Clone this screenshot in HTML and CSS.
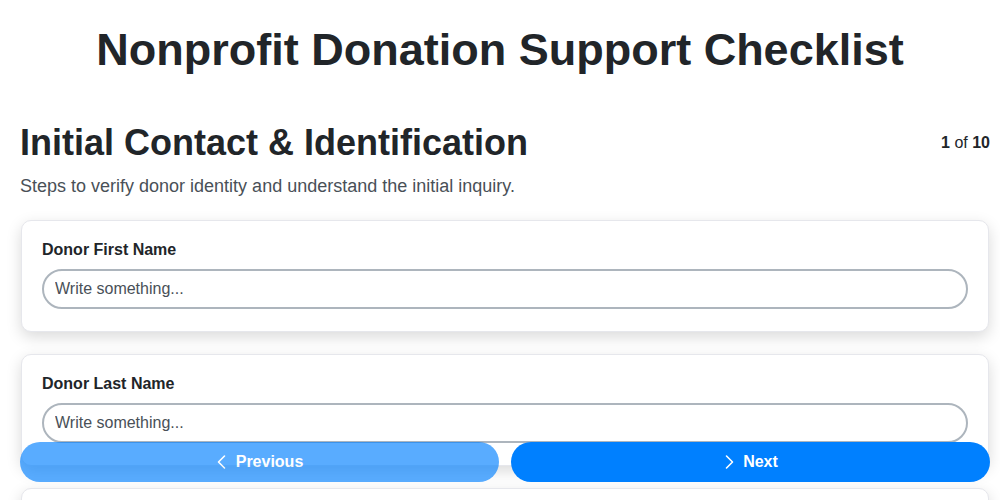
FILE: index.html
```html
<!DOCTYPE html>
<html lang="en">
<head>
<meta charset="utf-8">
<title>Nonprofit Donation Support Checklist</title>
<link rel="stylesheet" href="styles.css">
</head>
<body>
<header class="top">
  <h1 class="title">Nonprofit Donation Support Checklist</h1>
</header>
<main class="step">
  <div class="step-head">
    <h2 class="step-title">Initial Contact &amp; Identification</h2>
    <div class="step-count"><b>1</b> of <b>10</b></div>
  </div>
  <p class="step-desc">Steps to verify donor identity and understand the initial inquiry.</p>

  <section class="card">
    <label class="field-label" for="f1">Donor First Name</label>
    <input class="field-input" id="f1" type="text" placeholder="Write something...">
  </section>
  <section class="card">
    <label class="field-label" for="f2">Donor Last Name</label>
    <input class="field-input" id="f2" type="text" placeholder="Write something...">
  </section>
  <section class="card">
    <label class="field-label" for="f3">Donor Email Address</label>
    <input class="field-input" id="f3" type="text" placeholder="Write something...">
  </section>
</main>
<nav class="nav">
  <button class="btn btn-prev" type="button" disabled>
    <svg class="chev" viewBox="0 0 16 16" width="16" height="16"><polyline points="10.5,2 4.5,8 10.5,14"/></svg>
    <span>Previous</span>
  </button>
  <button class="btn btn-next" type="button">
    <svg class="chev" viewBox="0 0 16 16" width="16" height="16"><polyline points="5.5,2 11.5,8 5.5,14"/></svg>
    <span>Next</span>
  </button>
</nav>
</body>
</html>
```

FILE: styles.css
```css
html, body {
  margin: 0;
  padding: 0;
  background: #ffffff;
  font-family: "Liberation Sans", Arial, sans-serif;
  color: #212529;
}

.top {
  padding-top: 23px;
  text-align: center;
}

.title {
  margin: 0;
  font-size: 45px;
  line-height: 54px;
  font-weight: 700;
  color: #212529;
}

.step {
  padding: 44px 11px 0 21px;
}

.step-head {
  display: flex;
  align-items: center;
  justify-content: space-between;
  margin-left: -1px;
  margin-right: -1px;
}

.step-title {
  margin: 0;
  font-size: 36px;
  line-height: 43px;
  font-weight: 700;
  color: #212529;
}

.step-count {
  font-size: 16px;
  color: #212529;
}

.step-desc {
  margin: 9px 0 20px -1px;
  font-size: 18px;
  line-height: 27px;
  color: #495057;
}

.card {
  border: 1px solid #e6e7ec;
  border-radius: 10px;
  padding: 19px 20px 22px;
  margin-bottom: 22px;
  box-shadow: 0 5px 15px rgba(0, 0, 0, 0.15);
  background: #ffffff;
}

.field-label {
  display: block;
  font-size: 16px;
  line-height: 19px;
  font-weight: 700;
  color: #212529;
  margin-bottom: 10px;
}

.field-input {
  display: block;
  box-sizing: border-box;
  width: 100%;
  height: 40px;
  border: 2px solid #adb5bd;
  border-radius: 20px;
  padding: 0 11px;
  font-family: "Liberation Sans", Arial, sans-serif;
  font-size: 16px;
  color: #212529;
  background: #ffffff;
  outline: none;
}

.field-input::placeholder {
  color: #495057;
  opacity: 1;
}

.nav {
  position: fixed;
  left: 20px;
  right: 10px;
  bottom: 18px;
  display: flex;
  gap: 12px;
}

.btn {
  flex: 1;
  height: 40px;
  border: none;
  border-radius: 20px;
  display: flex;
  align-items: center;
  justify-content: center;
  gap: 6px;
  font-family: "Liberation Sans", Arial, sans-serif;
  font-size: 16px;
  font-weight: 700;
  color: #ffffff;
  background: #0080ff;
  padding: 0;
}

.btn-prev {
  opacity: 0.65;
}

.chev {
  fill: none;
  stroke: #ffffff;
  stroke-width: 1.6;
  stroke-linecap: round;
  stroke-linejoin: round;
  margin-left: -2px;
}
```
